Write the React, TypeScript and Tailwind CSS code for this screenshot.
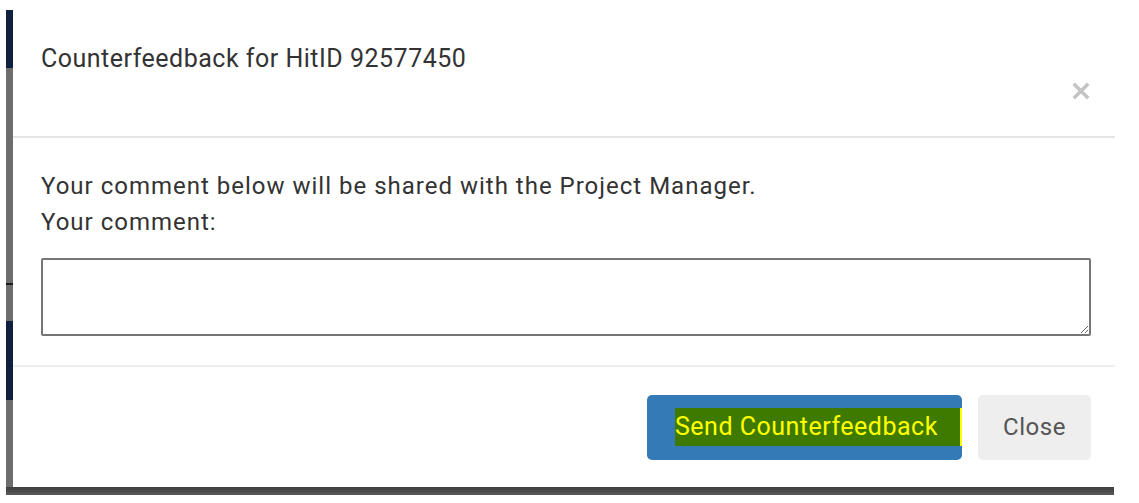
import { FC } from "react"

const font = { fontFamily: "Roboto, 'Liberation Sans', sans-serif" }

const App: FC = () => {
  return (
    <div className="h-[503px] w-[1139px] overflow-hidden bg-white pl-[6px] pt-[10px] text-[#333]" style={font}>
      <div className="flex h-[477px] w-[1109px]">
        {/* page behind the modal */}
        <div className="flex w-[7px] flex-col">
          <div className="h-[58px] bg-[#0f213f]" />
          <div className="h-[215px] bg-[#6d6d6d]" />
          <div className="h-[2px] bg-[#1a1a1a]" />
          <div className="h-[36px] bg-[#6d6d6d]" />
          <div className="h-[79px] bg-[#0f213f]" />
          <div className="flex-1 bg-[#6d6d6d]" />
        </div>

        <div className="flex flex-1 flex-col rounded-tl-[3px] bg-white">
          {/* header */}
          <div className="flex h-[128px] items-start justify-between border-b-2 border-[#e5e5e5] pl-[28px] pr-[25px] pt-[35px]">
            <h4 className="text-[25px] leading-[28px] tracking-[0.5px]">Counterfeedback for HitID 92577450</h4>
            <button className="mt-[37px] h-[18px] w-[18px]">
              <svg viewBox="0 0 18 18" className="h-[18px] w-[18px]">
                <path d="M3 3L15 15M15 3L3 15" stroke="#c4c4c4" strokeWidth="3.5" strokeLinecap="square" />
              </svg>
            </button>
          </div>

          {/* body */}
          <div className="flex h-[229px] flex-col border-b-2 border-[#eeeeee] pl-[28px] pr-[24px] pt-[30px]">
            <p className="text-[24px] leading-[36px] tracking-[1px]">Your comment below will be shared with the Project Manager.</p>
            <p className="text-[24px] leading-[36px] tracking-[1px]">Your comment:</p>
            <textarea className="mt-[18px] h-[78px] w-full resize-y rounded-[2px] border-2 border-[#767676] bg-white" />
          </div>

          {/* footer */}
          <div className="flex flex-1 items-center justify-end gap-[16px] pr-[24px]">
            <button className="flex h-[65px] w-[315px] items-center justify-end rounded-[5px] bg-[#337ab7]">
              <span className="flex h-[38px] w-[287px] items-center border-r-2 border-[#ffff00] bg-[#3f7a00] text-[25px] tracking-[0.5px] text-[#ffff00]">
                Send Counterfeedback
              </span>
            </button>
            <button className="h-[65px] w-[113px] rounded-[5px] bg-[#eeeeee] text-[24px] tracking-[0.5px] text-[#555]">Close</button>
          </div>
        </div>
      </div>
      <div className="h-[8px] w-[1108px] bg-gradient-to-b from-[#3d3d3d] to-[#5a5a5a]" />
    </div>
  )
}

export default App
